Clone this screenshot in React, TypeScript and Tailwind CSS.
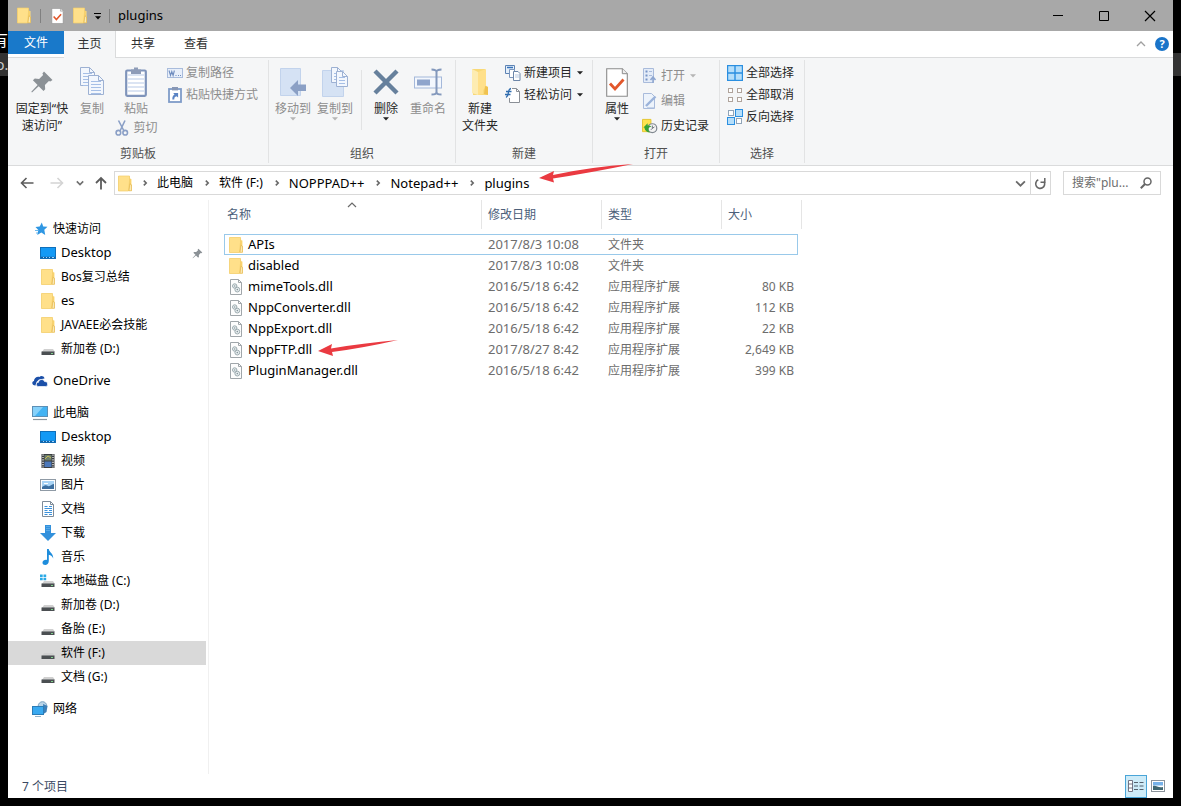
import type { ReactNode } from "react";

/* ---------- icons ---------- */

const FolderIcon = ({ w = 16, h = 16 }: { w?: number; h?: number }) => (
  <svg width={w} height={h} viewBox="0 0 16 16" className="shrink-0" aria-hidden="true">
    <path d="M1.5 0.5h11v3h2v12h-13z" fill="#ffdf82" />
    <path d="M12.5 1.5v4l-1 9.5h3V9l-1-1V3.5z" fill="#f3c65a" />
    <path d="M1.5 0.5h11v5l-1 10h-10z" fill="#ffe08a" stroke="#f2cd6a" strokeWidth="0.7" />
    <path d="M12 15.3l.9-7 1.6 1.2v5.8z" fill="#fbe9b4" stroke="#e3b54a" strokeWidth="0.6" />
  </svg>
);

const BigFolderIcon = () => (
  <svg width="20" height="28" viewBox="0 0 20 28" aria-hidden="true">
    <path d="M2 1h13v16l3 2v8H3z" fill="#f8d978" />
    <path d="M2 1l6 3v23l-6-2z" fill="#fdecb2" />
    <path d="M8 4l8-3v18l-3 3v4L8 27z" fill="#ffe08a" />
    <path d="M14 26l1-8 3 1v8z" fill="#f0c250" />
  </svg>
);

const CheckDocIcon = ({ w = 14, h = 16 }: { w?: number; h?: number }) => (
  <svg width={w} height={h} viewBox="0 0 22 29" aria-hidden="true">
    <path d="M.7.7h15.6l5 5v22.6H.7z" fill="#fff" stroke="#8c8c8c" strokeWidth="1.1" />
    <path d="M16.3.7v5h5" fill="#eee" stroke="#8c8c8c" strokeWidth="1" />
    <path d="M4 15.5l5 5.5 8.5-9.5" fill="none" stroke="#e2572b" strokeWidth="2.8" />
  </svg>
);

const Caret = ({ color = "#222" }: { color?: string }) => (
  <svg width="6" height="4" viewBox="0 0 6 4" aria-hidden="true">
    <path d="M0 .3h6L3 3.6z" fill={color} />
  </svg>
);

const PinIcon = ({ size = 24 }: { size?: number }) => (
  <svg width={size} height={size} viewBox="0 0 24 24" aria-hidden="true">
    <path d="M14 1.5l8.5 8.5-2.2 1.6-1.4-.6-4 4 .3 4.2-1.7 1.8-4.8-4.8L2 22.5l-.7-.7 6.3-6.9-4.7-4.7 1.9-1.6 4.3.3 4-4-.7-1.4z" fill="#8b9196" />
  </svg>
);

const page = (x: number, y: number, w: number, h: number, lines: number) => (
  <g>
    <path
      d={`M${x} ${y}h${w - 5}l5 5v${h - 5}h${-w}z`}
      fill="#f3f7fd"
      stroke="#9db1d3"
      strokeWidth="1"
    />
    <path d={`M${x + w - 5} ${y}v5h5`} fill="none" stroke="#9db1d3" />
    {Array.from({ length: lines }, (_, i) => (
      <path key={i} d={`M${x + 2.5} ${y + 6 + i * 3}h${w - 5}`} stroke="#a6bfe6" strokeWidth="1" />
    ))}
  </g>
);

const CopyIcon = () => (
  <svg width="26" height="30" viewBox="0 0 26 30" aria-hidden="true">
    {page(1.5, 0.5, 14, 18, 5)}
    {page(9.5, 8.5, 15, 19, 5)}
  </svg>
);

const PasteIcon = () => (
  <svg width="22" height="30" viewBox="0 0 22 30" aria-hidden="true">
    <rect x="1.2" y="3.5" width="19.6" height="25.3" rx="1" fill="#fff" stroke="#7f94bb" strokeWidth="2.2" />
    <path d="M2.500 8h17M2.500 12h17M2.500 16h17M2.500 20h17M2.500 24h17" stroke="#cfdcf0" strokeWidth="1.4" />
    <path d="M6 2.5h3V.5h4v2h3V7H6z" fill="#8e9cb8" />
  </svg>
);

const CutIcon = () => (
  <svg width="14" height="16" viewBox="0 0 14 16" aria-hidden="true">
    <g fill="none" stroke="#8a9fc6" strokeWidth="1.6">
      <path d="M3.5 .5L9 11M10 .5L5 11" />
      <circle cx="3.4" cy="12.7" r="2.3" />
      <circle cx="10.2" cy="12.7" r="2.3" />
    </g>
  </svg>
);

const CopyPathIcon = () => (
  <svg width="16" height="10" viewBox="0 0 16 10" aria-hidden="true">
    <rect x=".5" y=".5" width="15" height="9" fill="#e8effa" stroke="#a9bcdc" />
    <path d="M2 2.5l1.5 5 1.3-4 1.3 4 1.3-5M8.5 7.5h1M11 7.5h1M13 7.5h1" fill="none" stroke="#6f8dbf" strokeWidth="1.1" />
  </svg>
);

const ShortcutIcon = () => (
  <svg width="14" height="16" viewBox="0 0 14 16" aria-hidden="true">
    <rect x="1" y="2" width="12" height="13" fill="#fff" stroke="#7f9cc8" strokeWidth="1.8" />
    <rect x="4" y="0" width="6" height="3.4" fill="#8797b5" />
    <path d="M4.300 12.500C4.300 9.500 5 8.200 6.500 7.800L5.300 6h4.800v4.600L8.500 9.300c-1.800.4-2.200 1.500-2.200 3.200z" fill="#5b84c4" />
  </svg>
);

const MoveToIcon = () => (
  <svg width="28" height="30" viewBox="0 0 28 30" aria-hidden="true">
    <path d="M1.500 1.500h20v27h-20z" fill="#d5e2f4" stroke="#c2d3ec" />
    <path d="M11 21l8-8v4.500h8v6.500h-8v5z" fill="#8ba0c5" />
  </svg>
);

const CopyToIcon = () => (
  <svg width="28" height="31" viewBox="0 0 28 31" aria-hidden="true">
    <path d="M1.500 3.500h21v26h-21z" fill="#d5e2f4" stroke="#c2d3ec" />
    {page(10.5, 0.5, 11, 15, 3)}
    {page(15.5, 4.5, 11, 15, 3)}
  </svg>
);

const DeleteIcon = () => (
  <svg width="26" height="26" viewBox="0 0 26 26" aria-hidden="true">
    <path d="M2 2l22 22M24 2L2 24" stroke="#66809c" strokeWidth="4.400" />
  </svg>
);

const RenameIcon = () => (
  <svg width="28" height="28" viewBox="0 0 28 28" aria-hidden="true">
    <rect x=".5" y="9" width="27" height="11" fill="#f3f7fd" stroke="#a4b8da" />
    <rect x="3" y="11.500" width="13" height="6" fill="#8fa5cc" />
    <path d="M17.500 1.500c3 0 5 .5 5 2.500v20c0 2-2 2.500-5 2.500M27.500 1.500c-3 0-5 .5-5 2.500M27.500 26.500c-3 0-5-.5-5-2.500" fill="none" stroke="#8398bc" strokeWidth="2" />
  </svg>
);

const NewItemIcon = () => (
  <svg width="16" height="16" viewBox="0 0 16 16" aria-hidden="true">
    <path d="M.5 .5h9v8h-9z" fill="#e5f0fb" stroke="#5d83b4" />
    <path d="M2 2.500h6" stroke="#3672b9" strokeWidth="1.500" />
    <path d="M4.500 4.500h5v8h-5z" fill="#fff" stroke="#7c97bd" />
    <path d="M8.500 6.500h4.500l2 2v7H8.500z" fill="#fff" stroke="#6d86a8" />
    <path d="M10 10h4M10 12h4" stroke="#b8c9df" />
  </svg>
);

const EasyAccessIcon = () => (
  <svg width="16" height="16" viewBox="0 0 16 16" aria-hidden="true">
    <path d="M4.500 1.500h7l3 3v11h-10z" fill="#fff" />
    <path d="M7 1.500h4.500l3 3v11h-10V11M11.500 1.500v3h3" fill="none" stroke="#8a8f96" />
    <path d="M1 4.500h5.500M0 7.500h5.500M6 1.500C3.500 2 3.500 4 3.300 6S3 9.500 1 10.500" fill="none" stroke="#2f6cae" strokeWidth="1.300" />
  </svg>
);

const OpenIcon = () => (
  <svg width="14" height="16" viewBox="0 0 14 16" aria-hidden="true">
    <path d="M.5 .5h10v14H.5z" fill="#e4ecf8" stroke="#a9bbdb" />
    <path d="M2.500 3.500h2M2.500 7.500h2M2.500 11.500h2" stroke="#7794c6" strokeWidth="2" />
    <path d="M6 3.500h3M6 7.500h3" stroke="#a9bbdb" />
    <path d="M10 15V9M7.500 12l2.500-3 2.500 3" fill="none" stroke="#8ea6d0" strokeWidth="1.500" />
  </svg>
);

const EditIcon = () => (
  <svg width="14" height="16" viewBox="0 0 14 16" aria-hidden="true">
    <path d="M.5 .5h8l3 3v12H.5z" fill="#edf3fb" stroke="#a9bbdb" />
    <path d="M3 13L12.500 3.500" stroke="#9bb2da" strokeWidth="2.400" />
    <path d="M4 14.500h7" stroke="#c5d4ea" />
  </svg>
);

const HistoryIcon = () => (
  <svg width="17" height="16" viewBox="0 0 17 16" aria-hidden="true">
    <path d="M.5 1h9v13h-9z" fill="#ffe34f" stroke="#e3c42f" />
    <circle cx="11" cy="10.300" r="4.700" fill="#f2f2f2" stroke="#808890" strokeWidth="1.300" />
    <path d="M11 7.500v3l2.200-1.500M11 10.500l-1.600 1.600" fill="none" stroke="#656d75" />
    <path d="M1.500 9.500L6 5v2.500c2.500 0 3 .5 4 1.500-2 0-3.200.3-3.200 3 .2 1.500 1 2.300 2 3C5.500 15 3 13 2.500 9.500z" fill="#36a336" />
  </svg>
);

const cells = [
  [0, 0],
  [9, 0],
  [0, 9],
  [9, 9],
];

const SelectAllIcon = () => (
  <svg width="16" height="16" viewBox="0 0 16 16" aria-hidden="true">
    <rect x=".6" y=".6" width="14.800" height="14.800" fill="#b5defa" stroke="#2b8fe0" strokeWidth="1.200" />
    <path d="M8 0v16M0 8h16" stroke="#2b8fe0" strokeWidth="1.400" />
  </svg>
);

const SelectNoneIcon = () => (
  <svg width="16" height="16" viewBox="0 0 16 16" aria-hidden="true">
    {cells.map(([x, y]) => (
      <rect key={`${x}-${y}`} x={x + 1.5} y={y + 1.5} width="4" height="4" fill="#fff" stroke="#b0a49c" />
    ))}
  </svg>
);

const InvertIcon = () => (
  <svg width="16" height="16" viewBox="0 0 16 16" aria-hidden="true">
    <rect x="1.500" y="1.500" width="5" height="5" fill="#fff" stroke="#90a4b8" />
    <rect x="8.500" y=".5" width="7" height="7" fill="#b5defa" stroke="#2b8fe0" />
    <rect x=".5" y="8.500" width="7" height="7" fill="#b5defa" stroke="#2b8fe0" />
    <rect x="9.500" y="9.500" width="5" height="5" fill="#fff" stroke="#90a4b8" />
  </svg>
);

const StarIcon = () => (
  <svg width="16" height="16" viewBox="0 0 16 16" aria-hidden="true">
    <path d="M9.800 1.500l1.400 4 4.300.3-3.200 3 .9 5.200-3.900-2.500-4 2.500 1-4.900-2.800-3 4.200-.5z" fill="#2f97e3" />
    <path d="M3 9.500h3M4 12h2" stroke="#6bb8ee" />
  </svg>
);

const DesktopIcon = () => (
  <svg width="16" height="16" viewBox="0 0 16 16" aria-hidden="true">
    <rect x=".5" y="2.500" width="15" height="11" fill="#1399f5" stroke="#0f6fba" />
    <path d="M1 12.500h14" stroke="#1560a0" strokeWidth="1.500" />
    <path d="M3 12.500h1M6 12.500h1M9 12.500h1M12 12.500h2" stroke="#9fd5ff" />
  </svg>
);

const DriveShape = () => (
  <g>
    <path d="M4 8h9l2 3H2z" fill="#d0d0d0" />
    <path d="M1.500 10.500h13v3.500h-13z" fill="#4b4f52" />
    <path d="M2 10.500h12" stroke="#8a8d8f" />
    <path d="M11 12.500h2" stroke="#7fd08a" />
  </g>
);

const DriveIcon = () => (
  <svg width="16" height="16" viewBox="0 0 16 16" aria-hidden="true">
    <DriveShape />
  </svg>
);

const SystemDriveIcon = () => (
  <svg width="16" height="16" viewBox="0 0 16 16" aria-hidden="true">
    <DriveShape />
    <path d="M0 1.500h2.700v2.500H0zM3.500 1.500h2.700v2.500H3.500zM0 4.800h2.700v2.500H0zM3.500 4.800h2.700v2.500H3.500z" fill="#2aa9e6" />
  </svg>
);

const CloudIcon = () => (
  <svg width="16" height="16" viewBox="0 0 16 16" aria-hidden="true">
    <path d="M3.500 12.500C-.3 12.500-.6 8.600 2 8c0-3 3-4.800 5.500-4C8.500 2.500 12 2.700 12.500 5.500L7 6.500 4.500 9z" fill="#1b4fa8" />
    <path d="M6.500 13.500c-2.800 0-3-4 0-4.200.3-3.200 5-3.800 6 -.8 3.900-.4 4.200 5 .8 5z" fill="#1b4fa8" stroke="#fff" strokeWidth=".7" />
  </svg>
);

const ComputerIcon = () => (
  <svg width="16" height="16" viewBox="0 0 16 16" aria-hidden="true">
    <rect x=".5" y="1.500" width="15" height="10" fill="#43b3f3" stroke="#5c8fb5" />
    <path d="M1 2h10L3 11H1z" fill="#86d1fa" />
    <path d="M1 14.500h14" stroke="#8c979f" strokeWidth="1.200" />
  </svg>
);

const VideoIcon = () => (
  <svg width="16" height="16" viewBox="0 0 16 16" aria-hidden="true">
    <rect x="1.500" y="1" width="13" height="14" fill="#3a3d40" />
    <rect x="4.500" y="2" width="7" height="5.500" fill="#6d7f6d" />
    <rect x="4.500" y="8.500" width="7" height="5.500" fill="#4c78ba" />
    <path d="M5 6l3-3 3 2" stroke="#c8bd58" fill="none" />
    <path d="M3 1.500v13M13 1.500v13" stroke="#eee" strokeWidth="1.300" strokeDasharray="1.200 1.200" />
  </svg>
);

const PictureIcon = () => (
  <svg width="16" height="16" viewBox="0 0 16 16" aria-hidden="true">
    <rect x=".5" y="2.500" width="15" height="11" fill="#fff" stroke="#8f9aa5" />
    <rect x="2" y="4" width="12" height="8" fill="#a9d4f5" />
    <path d="M2 10c3-2 4-2 6-1s4-2 6-2v5H2z" fill="#3c6fa0" />
    <path d="M4 6.500h4" stroke="#fff" />
  </svg>
);

const DocumentIcon = () => (
  <svg width="16" height="16" viewBox="0 0 16 16" aria-hidden="true">
    <path d="M2.500 .5h8l3 3v12h-11z" fill="#fff" stroke="#7f8c99" />
    <path d="M10.500 .5v3h3" fill="none" stroke="#7f8c99" />
    <path d="M4.500 5.500h3M9 5.500h3M4.500 7.500h7.500M4.500 9.500h3M9 9.500h3M4.500 11.500h7.500M4.500 13.500h3M9 13.500h3" stroke="#3c92dc" />
  </svg>
);

const DownloadIcon = () => (
  <svg width="16" height="16" viewBox="0 0 16 16" aria-hidden="true">
    <path d="M5 0h6v8h5l-8 8-8-8h5z" fill="#3391dc" />
    <path d="M6 1.500h4M6 3.500h4M6 5.500h4" stroke="#57a9e8" />
  </svg>
);

const MusicIcon = () => (
  <svg width="16" height="16" viewBox="0 0 16 16" aria-hidden="true">
    <path d="M7 0h1.800c.3 3.500 4.700 4 4.400 9.500-.8-2-2.300-3.500-4.400-3.700V12c0 5-6.500 4.800-6.300 1.500.2-2 2.500-3 4.500-2.500z" fill="#1e8ddc" />
  </svg>
);

const NetworkIcon = () => (
  <svg width="16" height="16" viewBox="0 0 16 16" aria-hidden="true">
    <circle cx="10.500" cy="5" r="4.300" fill="#b9d4e8" stroke="#7ba3c2" />
    <path d="M11 3l4.500 2-1 6-3 2z" fill="#3d7fb8" />
    <rect x=".5" y="5.500" width="11" height="8" fill="#39a9f0" stroke="#2a7db8" />
    <path d="M3 15.500h6" stroke="#94b3c8" />
  </svg>
);

const DllIcon = () => (
  <svg width="14" height="16" viewBox="0 0 14 16" className="shrink-0" aria-hidden="true">
    <path d="M1.500 .5h8l3 3v12h-11z" fill="#fdfdfd" stroke="#a0a6aa" />
    <path d="M9.500 .5v3h3" fill="none" stroke="#a0a6aa" />
    <circle cx="5.700" cy="7" r="2.200" fill="#e9eef0" stroke="#9cabaf" />
    <circle cx="8.300" cy="10.600" r="2.400" fill="#e9eef0" stroke="#9cabaf" />
    <circle cx="5.700" cy="7" r=".7" fill="#84959a" />
    <circle cx="8.300" cy="10.600" r=".8" fill="#84959a" />
  </svg>
);

const RefreshIcon = () => (
  <svg width="13" height="13" viewBox="0 0 13 13" aria-hidden="true">
    <path d="M4.300 2.800A4.500 4.500 0 1 0 10 4.500" fill="none" stroke="#666" strokeWidth="1.600" />
    <path d="M10.800 1v4.200H6.500" fill="none" stroke="#666" strokeWidth="1.500" />
  </svg>
);

const Chevron = ({ dir, size = 10, color = "#6a6a6a", width = 1.6 }: { dir: "up" | "down" | "right"; size?: number; color?: string; width?: number }) => {
  const d = { up: "M1 7l4-4 4 4", down: "M1 3l4 4 4-4", right: "M3.500 2l3 3-3 3" }[dir];
  return (
    <svg width={size} height={size} viewBox="0 0 10 10" aria-hidden="true">
      <path d={d} fill="none" stroke={color} strokeWidth={width} />
    </svg>
  );
};

const RedArrow = ({ w, h, d }: { w: number; h: number; d: string }) => (
  <svg width={w} height={h} viewBox={`0 0 ${w} ${h}`} aria-hidden="true">
    <path d={d} fill="#ea3a41" />
  </svg>
);

/* ---------- ribbon ---------- */

function BigButton({ icon, lines, width, disabled, caret }: { icon: ReactNode; lines: string[]; width: string; disabled?: boolean; caret?: boolean }) {
  return (
    <button disabled={disabled} className={`flex flex-col items-center pt-1.5 ${width} ${disabled ? "text-[#8d8d8d]" : "text-[#262626]"}`}>
      <span className="flex h-9 items-center justify-center">{icon}</span>
      {lines.map((line) => (
        <span key={line} className="whitespace-nowrap leading-[17px]">
          {line}
        </span>
      ))}
      {caret && <Caret color={disabled ? "#b5b5b5" : "#222"} />}
    </button>
  );
}

function SmallButton({ icon, label, height = "h-[22px]", disabled, caret }: { icon: ReactNode; label: string; height?: string; disabled?: boolean; caret?: boolean }) {
  return (
    <button disabled={disabled} className={`flex items-center gap-[3px] whitespace-nowrap ${height} ${disabled ? "text-[#8d8d8d]" : "text-[#262626]"}`}>
      <span className="flex w-4 shrink-0 justify-center">{icon}</span>
      {label}
      {caret && (
        <span className="ml-0.5">
          <Caret color={disabled ? "#b5b5b5" : "#222"} />
        </span>
      )}
    </button>
  );
}

function Group({ label, width, children }: { label: string; width: string; children: ReactNode }) {
  return (
    <section aria-label={label} className={`my-0.5 flex flex-col border-r border-[#e2e3e4] ${width}`}>
      <div className="-mt-0.5 flex flex-1 items-start">{children}</div>
      <div className="pb-px text-center leading-[17px] text-[#505050]">{label}</div>
    </section>
  );
}

function Ribbon() {
  return (
    <div className="flex h-[108px] border-b border-[#dadbdc] bg-[#f5f6f7]">
      <Group label="剪贴板" width="w-[261px]">
        <div className="ml-1 flex">
          <BigButton icon={<PinIcon />} lines={["固定到“快", "速访问”"]} width="w-[60px]" />
          <BigButton icon={<CopyIcon />} lines={["复制"]} width="w-10" disabled />
          <div className="flex w-12 flex-col items-center">
            <BigButton icon={<PasteIcon />} lines={["粘贴"]} width="w-12" disabled />
            <SmallButton icon={<CutIcon />} label="剪切" disabled />
          </div>
        </div>
        <div className="ml-[7px] pt-1">
          <SmallButton icon={<CopyPathIcon />} label="复制路径" disabled />
          <SmallButton icon={<ShortcutIcon />} label="粘贴快捷方式" disabled />
        </div>
      </Group>
      <Group label="组织" width="w-[187px]">
        <BigButton icon={<MoveToIcon />} lines={["移动到"]} width="w-12" disabled caret />
        <BigButton icon={<CopyToIcon />} lines={["复制到"]} width="w-9" disabled caret />
        <div className="mt-3 ml-2 h-[60px] border-l border-[#e2e3e4]" />
        <BigButton icon={<DeleteIcon />} lines={["删除"]} width="w-12" caret />
        <BigButton icon={<RenameIcon />} lines={["重命名"]} width="w-9" disabled />
      </Group>
      <Group label="新建" width="w-[137px]">
        <BigButton icon={<BigFolderIcon />} lines={["新建", "文件夹"]} width="w-12" />
        <div className="ml-px pt-1">
          <SmallButton icon={<NewItemIcon />} label="新建项目" caret />
          <SmallButton icon={<EasyAccessIcon />} label="轻松访问" caret />
        </div>
      </Group>
      <Group label="打开" width="w-[127px]">
        <BigButton icon={<CheckDocIcon w={22} h={29} />} lines={["属性"]} width="w-12" caret />
        <div className="ml-px pt-[5px]">
          <SmallButton icon={<OpenIcon />} label="打开" height="h-[25px]" disabled caret />
          <SmallButton icon={<EditIcon />} label="编辑" height="h-[25px]" disabled />
          <SmallButton icon={<HistoryIcon />} label="历史记录" height="h-[25px]" />
        </div>
      </Group>
      <Group label="选择" width="w-[85px]">
        <div className="ml-[7px] pt-1">
          <SmallButton icon={<SelectAllIcon />} label="全部选择" />
          <SmallButton icon={<SelectNoneIcon />} label="全部取消" />
          <SmallButton icon={<InvertIcon />} label="反向选择" />
        </div>
      </Group>
    </div>
  );
}

/* ---------- navigation pane ---------- */

type NavItem = { label: string; icon: ReactNode; latin?: boolean; pinned?: boolean; selected?: boolean };
type NavGroup = { root: NavItem; items: NavItem[] };

const navigation: NavGroup[] = [
  {
    root: { label: "快速访问", icon: <StarIcon /> },
    items: [
      { label: "Desktop", icon: <DesktopIcon />, latin: true, pinned: true },
      { label: "Bos复习总结", icon: <FolderIcon /> },
      { label: "es", icon: <FolderIcon />, latin: true },
      { label: "JAVAEE必会技能", icon: <FolderIcon /> },
      { label: "新加卷 (D:)", icon: <DriveIcon /> },
    ],
  },
  { root: { label: "OneDrive", icon: <CloudIcon />, latin: true }, items: [] },
  {
    root: { label: "此电脑", icon: <ComputerIcon /> },
    items: [
      { label: "Desktop", icon: <DesktopIcon />, latin: true },
      { label: "视频", icon: <VideoIcon /> },
      { label: "图片", icon: <PictureIcon /> },
      { label: "文档", icon: <DocumentIcon /> },
      { label: "下载", icon: <DownloadIcon /> },
      { label: "音乐", icon: <MusicIcon /> },
      { label: "本地磁盘 (C:)", icon: <SystemDriveIcon /> },
      { label: "新加卷 (D:)", icon: <DriveIcon /> },
      { label: "备胎 (E:)", icon: <DriveIcon /> },
      { label: "软件 (F:)", icon: <DriveIcon />, selected: true },
      { label: "文档 (G:)", icon: <DriveIcon /> },
    ],
  },
  { root: { label: "网络", icon: <NetworkIcon /> }, items: [] },
];

function NavRow({ item, indent }: { item: NavItem; indent: string }) {
  return (
    <a
      href="#"
      aria-current={item.selected ? "true" : undefined}
      className={`mr-0.5 flex h-6 items-center gap-[5px] whitespace-nowrap ${indent} ${item.selected ? "bg-[#d9d9d9]" : ""} ${item.latin ? "text-[13px]" : ""}`}
    >
      {item.icon}
      {item.label}
      {item.pinned && (
        <span className="mr-[3px] ml-auto">
          <PinIcon size={11} />
        </span>
      )}
    </a>
  );
}

/* ---------- file list ---------- */

const files = [
  { name: "APIs", date: "2017/8/3 10:08", type: "文件夹", size: "", focused: true },
  { name: "disabled", date: "2017/8/3 10:08", type: "文件夹", size: "" },
  { name: "mimeTools.dll", date: "2016/5/18 6:42", type: "应用程序扩展", size: "80 KB" },
  { name: "NppConverter.dll", date: "2016/5/18 6:42", type: "应用程序扩展", size: "112 KB" },
  { name: "NppExport.dll", date: "2016/5/18 6:42", type: "应用程序扩展", size: "22 KB" },
  { name: "NppFTP.dll", date: "2017/8/27 8:42", type: "应用程序扩展", size: "2,649 KB", marked: true },
  { name: "PluginManager.dll", date: "2016/5/18 6:42", type: "应用程序扩展", size: "399 KB" },
];

function FileTable() {
  const head = "h-[29px] border-r border-[#e5e5e5] p-0 text-left font-normal";
  return (
    <table className="w-[577px] table-fixed border-separate border-spacing-0">
      <colgroup>
        <col className="w-[258px]" />
        <col className="w-[120px]" />
        <col className="w-[120px]" />
        <col className="w-[76px]" />
        <col className="w-[4px]" />
      </colgroup>
      <thead className="text-[#4c607a]">
        <tr>
          <th className={`${head} relative pl-[3px]`}>
            名称
            <span className="absolute top-0 left-1/2 -ml-1.5 flex">
              <Chevron dir="up" width={1.2} />
            </span>
          </th>
          <th className={`${head} pl-1.5`}>修改日期</th>
          <th className={`${head} pl-1.5`}>类型</th>
          <th className="p-0 pl-1.5 text-left font-normal">大小</th>
          <td className="border-r border-[#e5e5e5] p-0" />
        </tr>
      </thead>
      <tbody className="text-[#6d6d6d]">
        <tr aria-hidden="true">
          <td className="h-[5px] p-0" />
        </tr>
        {files.map((f) => {
          const line = f.focused ? "border-[#99c9ea]" : "border-transparent";
          return (
            <tr key={f.name} className="h-[21px] leading-[19px]">
              <td className={`border-y border-l p-0 pl-1 text-[13px] text-black ${line}`}>
                <div className="relative flex items-center gap-[5px]">
                  <span className="flex w-3.5 justify-center">{f.size ? <DllIcon /> : <FolderIcon />}</span>
                  {f.name}
                  {f.marked && (
                    <span className="absolute top-0 left-[89px]">
                      <RedArrow w={80} h={17} d="M0 11L14 4l-1 4.500Q45 3 80 0Q45 8 14 12l1 4z" />
                    </span>
                  )}
                </div>
              </td>
              <td className={`border-y p-0 pl-1.5 text-[13px] ${line}`}>{f.date}</td>
              <td className={`border-y p-0 pl-1.5 ${line}`}>{f.type}</td>
              <td className={`border-y border-r p-0 pr-[3px] text-right ${line}`}>{f.size}</td>
              <td className="p-0" />
            </tr>
          );
        })}
      </tbody>
    </table>
  );
}

/* ---------- window ---------- */

const crumbs = [
  { label: "此电脑", size: "" },
  { label: "软件 (F:)", size: "" },
  { label: "NOPPPAD++", size: "text-[13px]" },
  { label: "Notepad++", size: "text-[13px]" },
  { label: "plugins", size: "text-[13px]" },
];

export default function App() {
  return (
    <div className="relative flex min-h-screen flex-col overflow-hidden bg-black px-2 pb-2 font-['Noto_Sans','Noto_Sans_CJK_SC',sans-serif] text-[12px] text-black">
      <div aria-hidden="true" className="absolute inset-x-0 top-[53px] h-[23px] bg-[#333]" />
      <div aria-hidden="true" className="absolute top-[29px] -left-2 text-[16px] leading-[22px] text-white">有</div>
      <div aria-hidden="true" className="absolute top-[53px] -left-1 text-[14px] leading-[23px] text-[#ccc]">o.:</div>

      <main className="relative flex flex-1 flex-col bg-white">
        <header className="flex h-[31px] items-center bg-[#a8a8a8] pl-2">
          <FolderIcon w={16} h={17} />
          <span className="mx-2 h-3.5 border-l border-[#808080]" />
          <button aria-label="属性" className="flex w-[17px] justify-center">
            <CheckDocIcon w={13} h={16} />
          </button>
          <button aria-label="新建文件夹" className="ml-1.5 flex">
            <FolderIcon w={16} h={17} />
          </button>
          <button aria-label="自定义快速访问工具栏" className="ml-1.5 flex flex-col items-center gap-0.5 pt-0.5">
            <span className="h-px w-[7px] bg-black" />
            <Caret color="#000" />
          </button>
          <span className="mx-2 h-3.5 border-l border-[#808080]" />
          <h1 className="text-[13px]">plugins</h1>
          <div className="ml-auto flex self-stretch">
            <button aria-label="最小化" className="flex w-[46px] items-center justify-center">
              <svg width="12" height="12" viewBox="0 0 12 12"><path d="M1 5.500h10" stroke="#000" /></svg>
            </button>
            <button aria-label="最大化" className="flex w-[46px] items-center justify-center">
              <svg width="12" height="12" viewBox="0 0 12 12"><path d="M1.500 1.500h9v9h-9z" fill="none" stroke="#000" /></svg>
            </button>
            <button aria-label="关闭" className="flex w-[46px] items-center justify-center">
              <svg width="12" height="12" viewBox="0 0 12 12"><path d="M1 1l10 10M11 1L1 11" stroke="#000" strokeWidth="1.200" /></svg>
            </button>
          </div>
        </header>

        <nav aria-label="功能区" className="flex h-[27px] leading-[17px] text-[#303030]">
          <div className="w-14 border-b border-[#dadbdc]">
            <button className="h-[23px] w-full bg-[#1979ca] text-white">文件</button>
          </div>
          <button className="w-[52px] border-r border-[#dadbdc] bg-[#f5f6f7] pb-0.5">主页</button>
          <button className="w-[54px] border-b border-[#dadbdc] pb-px">共享</button>
          <button className="w-[52px] border-b border-[#dadbdc] pb-px">查看</button>
          <div className="flex flex-1 items-center justify-end gap-[9px] border-b border-[#dadbdc] pr-1">
            <button aria-label="折叠功能区" className="flex">
              <Chevron dir="up" color="#a0a0a0" width={1.3} />
            </button>
            <button aria-label="帮助" className="size-3.5 rounded-full bg-[#1a74c9] text-[11px] leading-[14px] font-bold text-white">?</button>
          </div>
        </nav>

        <Ribbon />

        <div className="flex h-[34px] items-center pr-3">
          <div className="flex w-[106px] items-center">
            <button aria-label="后退" className="ml-3 flex">
              <svg width="14" height="12" viewBox="0 0 14 12"><path d="M13.500 6H2M6.500 1L1.500 6l5 5" fill="none" stroke="#5c5c5c" strokeWidth="1.600" /></svg>
            </button>
            <button aria-label="前进" className="ml-4 flex" disabled>
              <svg width="14" height="12" viewBox="0 0 14 12"><path d="M.5 6H12M7.500 1l5 5-5 5" fill="none" stroke="#d4d4d4" strokeWidth="1.600" /></svg>
            </button>
            <button aria-label="最近位置" className="ml-3 flex">
              <Chevron dir="down" size={8} color="#707070" width={2} />
            </button>
            <button aria-label="上移" className="ml-2.5 flex">
              <svg width="14" height="14" viewBox="0 0 14 14"><path d="M7 13.500V2M2 7l5-5 5 5" fill="none" stroke="#5c5c5c" strokeWidth="1.800" /></svg>
            </button>
          </div>
          <div className="flex h-6 flex-1 items-center border border-[#d9d9d9] pl-0.5">
            <FolderIcon w={16} h={17} />
            <ol className="flex items-center leading-[18px]">
              {crumbs.map((c, i) => (
                <li key={c.label} className={`relative flex items-center ${c.size}`}>
                  <span className="mx-2 flex first:mx-2">
                    <Chevron dir="right" size={8} color="#666" width={2} />
                  </span>
                  <a href="#" className={i < crumbs.length - 1 ? "pr-[2px]" : ""}>{c.label}</a>
                  {i === crumbs.length - 1 && (
                    <span className="absolute -top-[10px] left-[79px]">
                      <RedArrow w={94} h={19} d="M0 14L15 7l-1 4Q50 3 94 0Q50 9 14 14.500l1 4z" />
                    </span>
                  )}
                </li>
              ))}
            </ol>
            <button aria-label="历史路径" className="mr-1 ml-auto flex">
              <Chevron dir="down" size={11} />
            </button>
            <button aria-label="刷新" className="flex h-full w-[20px] items-center justify-center border-l border-[#d9d9d9]">
              <RefreshIcon />
            </button>
          </div>
          <label className="ml-3 flex h-6 w-[98px] items-center border border-[#d9d9d9] px-2">
            <input aria-label="搜索" placeholder={'搜索"plu...'} className="w-0 flex-1 outline-none placeholder:text-[#6d6d6d]" />
            <svg width="12" height="12" viewBox="0 0 12 12" aria-hidden="true"><circle cx="7.500" cy="4.500" r="3.500" fill="none" stroke="#666" strokeWidth="1.500" /><path d="M5 7L.8 11.200" stroke="#666" strokeWidth="2" /></svg>
          </label>
        </div>

        <div className="flex flex-1">
          <nav aria-label="导航窗格" className="flex w-[201px] flex-col gap-2 border-r border-[#f0f0f0] pt-[17px]">
            {navigation.map((g) => (
              <div key={g.root.label}>
                <NavRow item={g.root} indent="pl-6" />
                {g.items.map((item) => (
                  <NavRow key={item.label} item={item} indent="pl-8" />
                ))}
              </div>
            ))}
          </nav>
          <div className="flex-1 pl-[15px]">
            <FileTable />
          </div>
        </div>

        <footer className="flex h-6 items-center justify-between pr-2 pl-3.5 text-[#3b4a63]">
          <span className="pt-0.5">7 个项目</span>
          <div className="flex items-center gap-1">
            <button aria-label="详细信息" aria-pressed="true" className="flex h-[23px] w-[22px] items-center justify-center border border-[#4aa5d8] bg-[#cdebf8]">
              <svg width="16" height="12" viewBox="0 0 16 12"><path d="M.5 .5h4v11h-4zM.5 4h4M.5 8h4" fill="#fff" stroke="#667" strokeWidth=".9" /><path d="M6 2.500h4M11.500 2.500h4M6 6h4M11.500 6h4M6 9.500h4M11.500 9.500h4" stroke="#55616e" /></svg>
            </button>
            <button aria-label="大图标" className="flex">
              <svg width="14" height="12" viewBox="0 0 14 12"><rect x=".5" y=".5" width="13" height="11" fill="#fff" stroke="#8b939b" /><rect x="2" y="2" width="10" height="3.500" fill="#76b1e8" /><path d="M2 6c3-1 5 2 10 1v3H2z" fill="#3f6670" /></svg>
            </button>
          </div>
        </footer>
      </main>
    </div>
  );
}
